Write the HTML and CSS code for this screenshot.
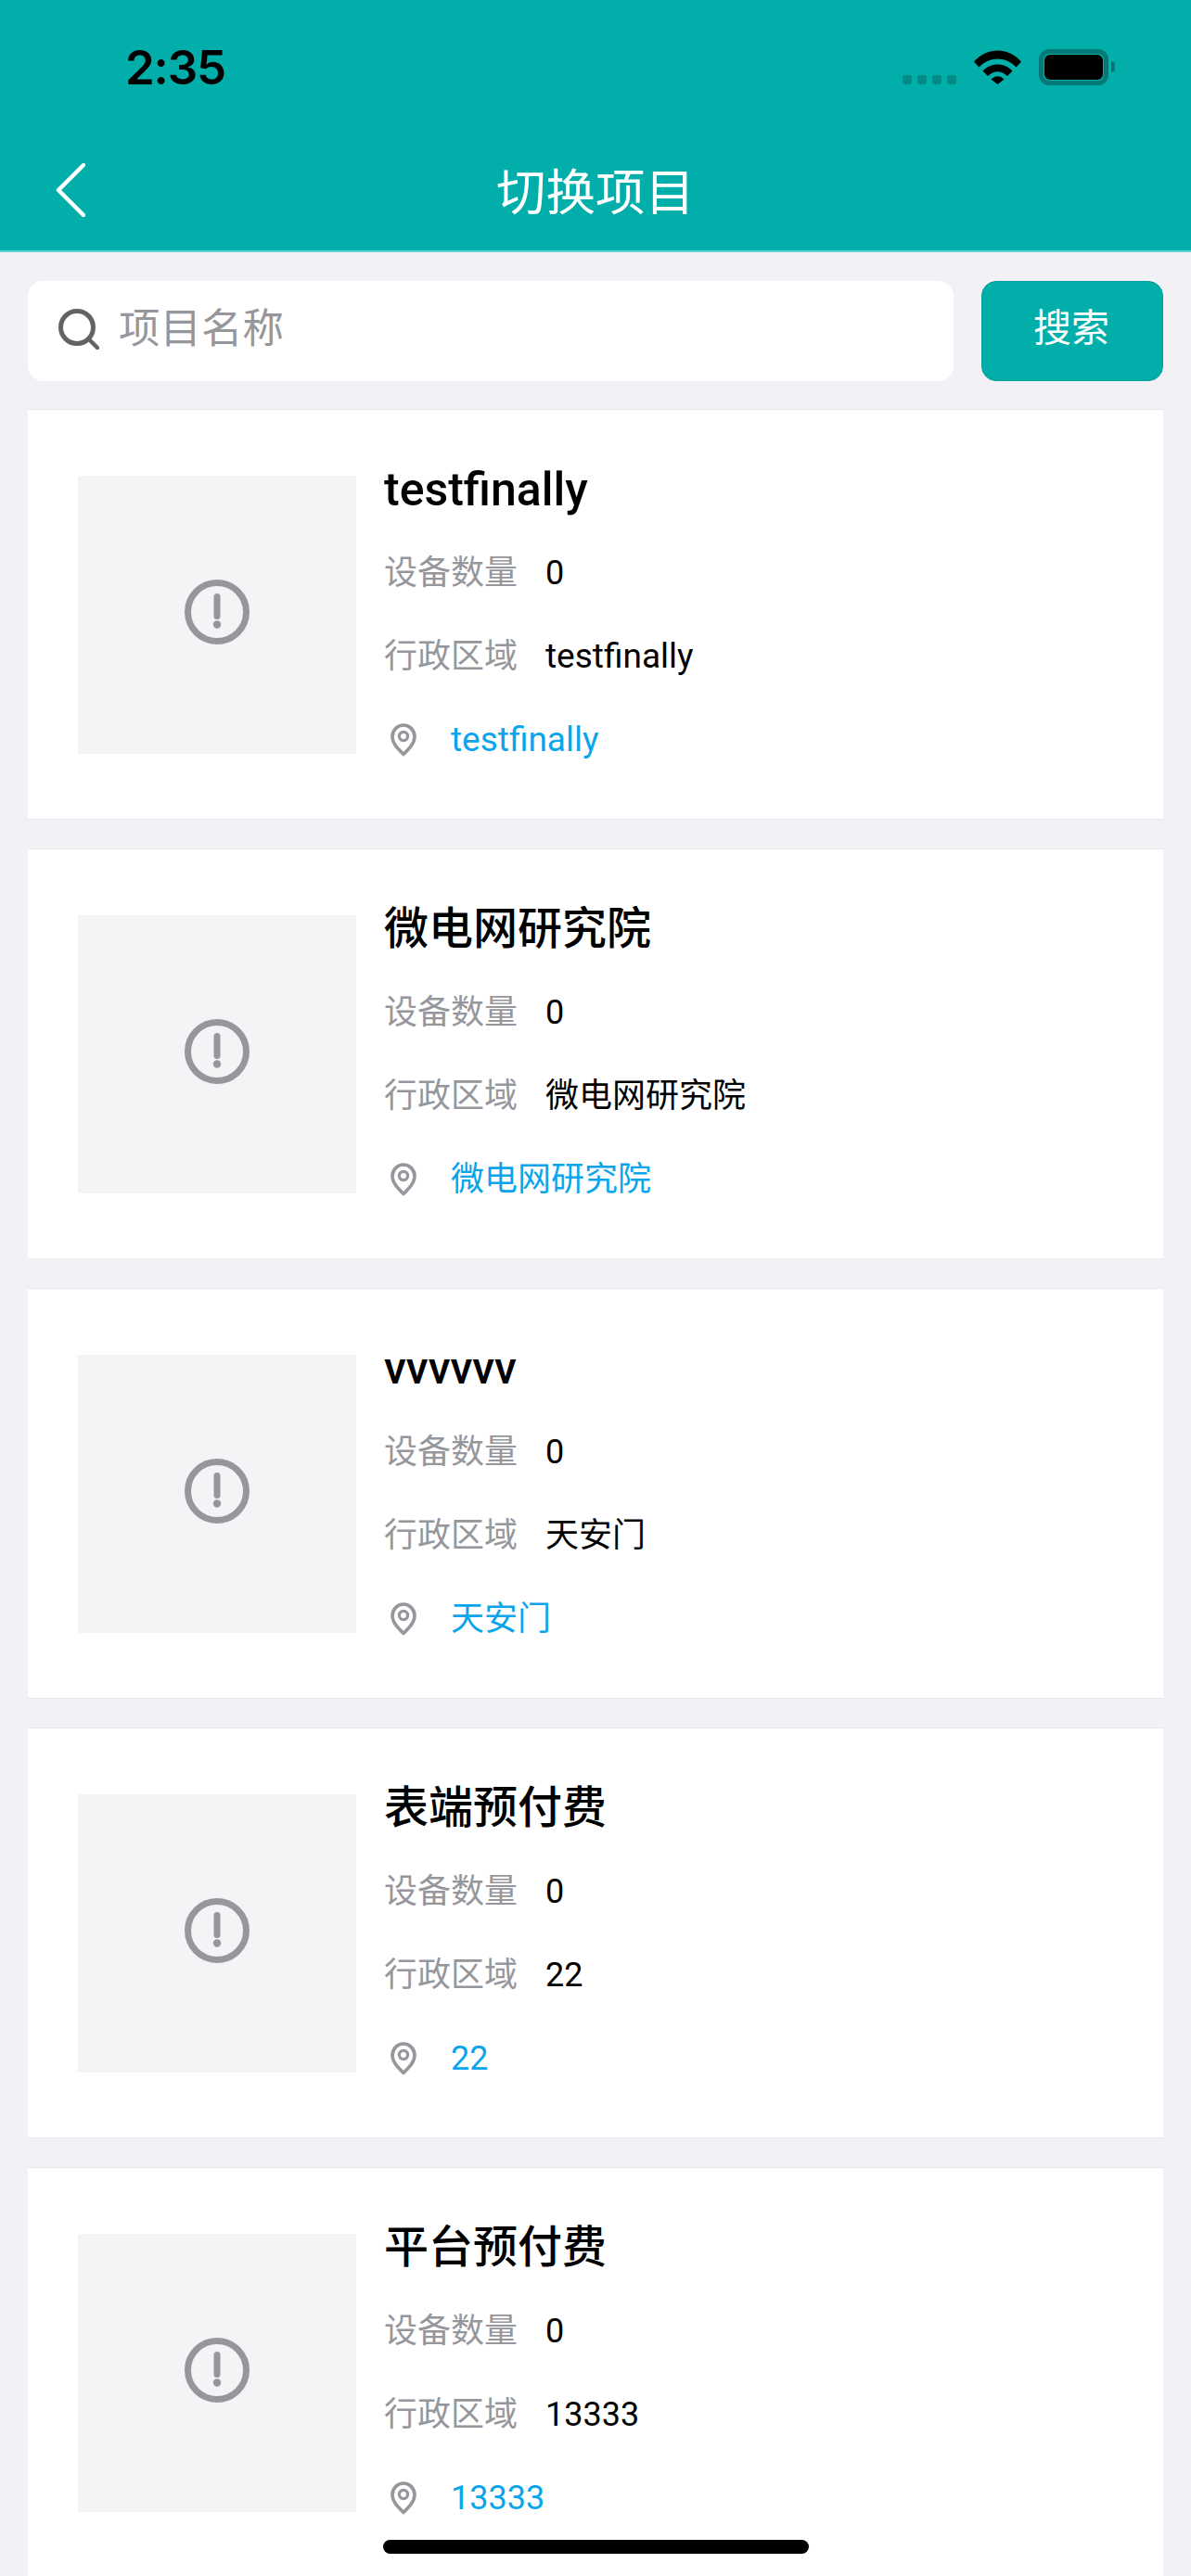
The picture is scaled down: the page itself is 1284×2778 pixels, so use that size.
FILE: index.html
```html
<!DOCTYPE html>
<html lang="zh-CN">
<head>
    <meta charset="UTF-8">
    <meta name="viewport" content="width=device-width, initial-scale=1.0">
    <title>切换项目</title>
    <link rel="stylesheet" href="styles.css">
</head>
<body>
    <svg class="icon-defs" width="0" height="0">
        <symbol id="icon-alert" viewBox="0 0 70 70">
            <circle cx="35" cy="35" r="31.5" fill="none" stroke="currentColor" stroke-width="7"/>
            <path d="M35 18.5V39.5" fill="none" stroke="currentColor" stroke-width="7" stroke-linecap="round"/>
            <circle cx="35" cy="48.5" r="4.2" fill="currentColor"/>
        </symbol>
        <symbol id="icon-pin" viewBox="0 0 28 36">
            <path d="M14 33.5C8 27.5 2 21.5 2 14.5C2 7.5 7.5 2 14 2C20.5 2 26 7.5 26 14.5C26 21.5 20 27.5 14 33.5Z" fill="none" stroke="currentColor" stroke-width="3.6" stroke-linejoin="round"/>
            <circle cx="14" cy="14" r="4.6" fill="none" stroke="currentColor" stroke-width="3.2"/>
        </symbol>
    </svg>

    <div class="header">
        <div class="status-bar">
            <span class="time">2:35</span>
            <div class="status-icons">
                <div class="signal"><i></i><i></i><i></i><i></i></div>
                <svg class="wifi" viewBox="0 0 51 37">
                    <path d="M0 12.5C14 -3.5 37 -3.5 51 12.5L45.5 18.5C34.5 6.5 16.5 6.5 5.5 18.5Z"/>
                    <path d="M9.5 22.5C18 13 33 13 41.5 22.5L36 28C29.5 21.5 21.5 21.5 15 28Z"/>
                    <path d="M18.5 31.5C22.5 27 28.5 27 32.5 31.5L25.5 37Z"/>
                </svg>
                <div class="battery"><div class="battery-fill"></div></div>
                <div class="battery-tip"></div>
            </div>
        </div>
        <div class="nav-bar">
            <svg class="back" viewBox="0 0 32 58">
                <path d="M30 2L3 29L30 56" fill="none" stroke="#fff" stroke-width="4.5" stroke-linecap="round" stroke-linejoin="round"/>
            </svg>
            <span class="nav-title">切换项目</span>
        </div>
    </div>

    <div class="search-row">
        <div class="search-box">
            <svg class="search-icon" viewBox="0 0 44 44">
                <circle cx="20" cy="20" r="17.5" fill="none" stroke="#636366" stroke-width="5"/>
                <path d="M33 33L42 42" fill="none" stroke="#636366" stroke-width="4.5" stroke-linecap="round"/>
            </svg>
            <span class="placeholder">项目名称</span>
        </div>
        <div class="search-btn">搜索</div>
    </div>

    <div class="list">
        <div class="card">
            <div class="thumb"><svg class="alert"><use href="#icon-alert"/></svg></div>
            <div class="info">
                <div class="name wide">testfinally</div>
                <div class="row"><span class="label">设备数量</span><span class="value">0</span></div>
                <div class="row"><span class="label">行政区域</span><span class="value wide">testfinally</span></div>
                <div class="row"><svg class="pin"><use href="#icon-pin"/></svg><span class="address wide">testfinally</span></div>
            </div>
        </div>
        <div class="card">
            <div class="thumb"><svg class="alert"><use href="#icon-alert"/></svg></div>
            <div class="info">
                <div class="name">微电网研究院</div>
                <div class="row"><span class="label">设备数量</span><span class="value">0</span></div>
                <div class="row"><span class="label">行政区域</span><span class="value">微电网研究院</span></div>
                <div class="row"><svg class="pin"><use href="#icon-pin"/></svg><span class="address">微电网研究院</span></div>
            </div>
        </div>
        <div class="card">
            <div class="thumb"><svg class="alert"><use href="#icon-alert"/></svg></div>
            <div class="info">
                <div class="name">vvvvvv</div>
                <div class="row"><span class="label">设备数量</span><span class="value">0</span></div>
                <div class="row"><span class="label">行政区域</span><span class="value">天安门</span></div>
                <div class="row"><svg class="pin"><use href="#icon-pin"/></svg><span class="address">天安门</span></div>
            </div>
        </div>
        <div class="card">
            <div class="thumb"><svg class="alert"><use href="#icon-alert"/></svg></div>
            <div class="info">
                <div class="name">表端预付费</div>
                <div class="row"><span class="label">设备数量</span><span class="value">0</span></div>
                <div class="row"><span class="label">行政区域</span><span class="value">22</span></div>
                <div class="row"><svg class="pin"><use href="#icon-pin"/></svg><span class="address">22</span></div>
            </div>
        </div>
        <div class="card">
            <div class="thumb"><svg class="alert"><use href="#icon-alert"/></svg></div>
            <div class="info">
                <div class="name">平台预付费</div>
                <div class="row"><span class="label">设备数量</span><span class="value">0</span></div>
                <div class="row"><span class="label">行政区域</span><span class="value">13333</span></div>
                <div class="row"><svg class="pin"><use href="#icon-pin"/></svg><span class="address">13333</span></div>
            </div>
        </div>
    </div>

    <div class="home-bar"></div>
</body>
</html>
```

FILE: styles.css
```css
html, body {
    height: 100%;
}
body {
    margin: 0;
    overflow: hidden;
    background-color: #f1f1f6;
    font-family: Roboto, "Noto Sans CJK SC", sans-serif;
    color: #000;
}
.icon-defs {
    position: absolute;
}
.header {
    background-color: #02aeaa;
    border-bottom: 2px solid #62d2cf;
    height: 270px;
}
.status-bar {
    display: flex;
    justify-content: space-between;
    height: 144px;
    padding: 47px 82px 0 135px;
    box-sizing: border-box;
}
.time {
    font-family: Inter, sans-serif;
    font-size: 51px;
    line-height: 51px;
    font-weight: 600;
    letter-spacing: -1.2px;
}
.status-icons {
    display: flex;
    align-items: flex-start;
    padding-top: 6px;
}
.signal {
    display: flex;
    gap: 6px;
    margin-top: 28px;
    margin-right: 19px;
}
.signal i {
    width: 10px;
    height: 10px;
    border-radius: 3px;
    background-color: #058a86;
}
.wifi {
    width: 51px;
    height: 37px;
    margin-top: 1px;
    margin-right: 19px;
}
.battery {
    width: 75px;
    height: 39px;
    box-sizing: border-box;
    border: 5px solid #047a78;
    border-radius: 11px;
    padding: 1px;
}
.battery-fill {
    height: 100%;
    background-color: #000;
    border-radius: 6px;
}
.battery-tip {
    width: 4px;
    height: 12px;
    margin: 13px 0 0 3px;
    background-color: #047a78;
    border-radius: 0 6px 6px 0;
}
.nav-bar {
    display: flex;
    align-items: center;
    justify-content: center;
    position: relative;
    height: 122px;
    padding-bottom: 4px;
    box-sizing: border-box;
}
.back {
    position: absolute;
    left: 60px;
    top: 32px;
    width: 32px;
    height: 58px;
}
.nav-title {
    font-size: 53.5px;
    color: #fff;
    font-weight: 400;
}
.search-row {
    display: flex;
    gap: 30px;
    margin: 31px 30px 0;
    height: 108px;
}
.search-box {
    flex: 1;
    display: flex;
    align-items: center;
    background-color: #fff;
    border-radius: 16px;
    padding-left: 33px;
    padding-bottom: 4px;
    box-sizing: border-box;
}
.search-icon {
    width: 44px;
    height: 44px;
    margin-right: 21px;
}
.placeholder {
    font-size: 44.5px;
    color: #96979c;
    margin-bottom: 9px;
}
.search-btn {
    width: 196px;
    box-sizing: border-box;
    display: flex;
    align-items: center;
    justify-content: center;
    background-color: #02aeaa;
    border: 1px solid #069c98;
    border-radius: 16px;
    color: #fff;
    font-size: 41px;
    padding-bottom: 14px;
    padding-right: 2px;
}
.list {
    display: flex;
    flex-direction: column;
    gap: 31px;
    margin: 30px 30px 0;
}
.card {
    display: flex;
    align-items: center;
    flex-shrink: 0;
    height: 443px;
    box-sizing: border-box;
    background-color: #fff;
    border-top: 1px solid #e8e8ed;
    border-bottom: 1px solid #e8e8ed;
    padding-top: 1px;
    padding-left: 54px;
}
.thumb {
    width: 300px;
    height: 300px;
    background-color: #f3f4f6;
    display: flex;
    align-items: center;
    justify-content: center;
}
.alert {
    width: 70px;
    height: 70px;
    color: #96979c;
    margin-bottom: 6px;
}
.info {
    margin-left: 30px;
}
.name {
    font-size: 48px;
    line-height: 90px;
    font-weight: 500;
}
.name.wide {
    font-size: 50px;
}
.row {
    display: flex;
    align-items: center;
    height: 90px;
    font-size: 36px;
    line-height: 90px;
}
.row .wide {
    font-size: 37px;
}
.label {
    color: #96979c;
    margin-right: 30px;
}
.pin {
    width: 28px;
    height: 36px;
    color: #96979c;
    margin-left: 7px;
    margin-right: 37px;
}
.address {
    color: #0aa5ea;
}
.home-bar {
    position: absolute;
    left: 413px;
    top: 2739px;
    width: 459px;
    height: 15px;
    border-radius: 8px;
    background-color: #000;
}
```
